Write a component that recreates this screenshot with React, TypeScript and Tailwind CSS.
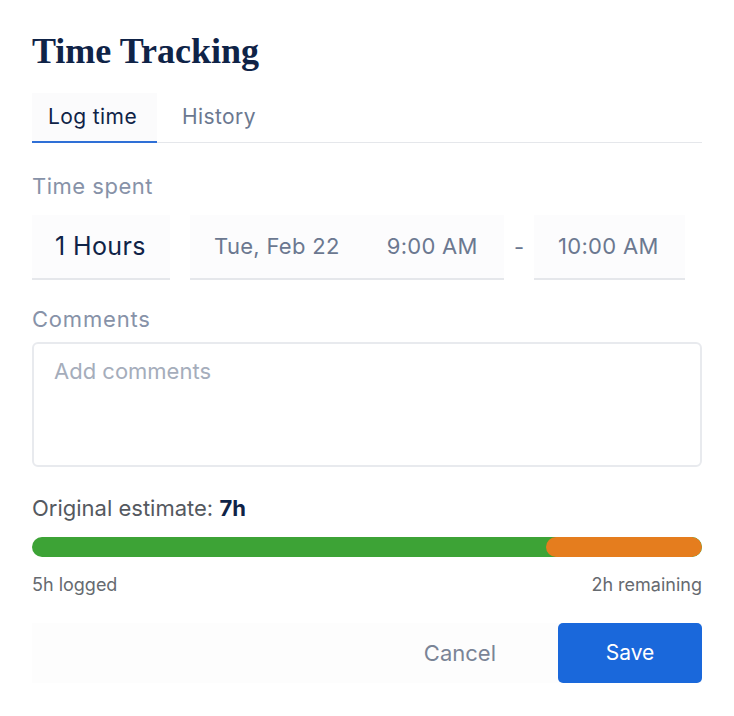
import React, { useState } from "react";

export default function App() {
  const [tab, setTab] = useState("log");
  const [comments, setComments] = useState("");

  const logged = 5;
  const estimate = 7;
  const pct = (logged / estimate) * 100;

  return (
    <div className="w-[734px] h-[716px] bg-white px-8 pt-[30px] font-['Inter',sans-serif]">
      <h1 className="font-['Liberation_Serif',serif] font-bold text-[36px] leading-[42px] text-[#0f2347]">
        Time Tracking
      </h1>

      {/* Tabs */}
      <div className="mt-[21px] flex border-b border-[#e5e7eb] text-[21px] tracking-[0.4px]">
        <button
          onClick={() => setTab("log")}
          className={`h-[50px] pl-[16px] pr-[20px] -mb-px border-b-2 ${
            tab === "log"
              ? "bg-[#fbfbfc] border-[#2f6fd6] text-[#0f2347]"
              : "border-transparent text-[#6b7890]"
          }`}
        >
          Log time
        </button>
        <button
          onClick={() => setTab("history")}
          className={`h-[50px] pl-[25px] pr-6 -mb-px border-b-2 ${
            tab === "history"
              ? "bg-[#fbfbfc] border-[#2f6fd6] text-[#0f2347]"
              : "border-transparent text-[#6b7890]"
          }`}
        >
          History
        </button>
      </div>

      {/* Time spent */}
      <div className="mt-[29px] text-[22px] leading-[28px] tracking-[0.5px] text-[#8792a8]">
        Time spent
      </div>
      <div className="mt-[15px] flex items-center">
        <div className="w-[138px] h-[65px] flex items-center pl-[23px] bg-[#fcfcfd] border-b-2 border-[#e5e7eb] text-[25px] tracking-[0.4px] text-[#0f2347]">
          1 Hours
        </div>
        <div className="ml-5 w-[314px] h-[65px] flex items-center pl-6 bg-[#fcfcfd] border-b-2 border-[#e5e7eb] text-[22px] tracking-[0.3px] text-[#6b7890]">
          <span>Tue, Feb 22</span>
          <span className="ml-[47px]">9:00 AM</span>
        </div>
        <div className="w-[30px] text-center text-[22px] text-[#6b7890]">-</div>
        <div className="w-[151px] h-[65px] flex items-center pl-6 bg-[#fcfcfd] border-b-2 border-[#e5e7eb] text-[22px] tracking-[0.3px] text-[#6b7890]">
          10:00 AM
        </div>
      </div>

      {/* Comments */}
      <div className="mt-[25px] text-[22px] leading-[28px] tracking-[0.8px] text-[#8792a8]">
        Comments
      </div>
      <textarea
        value={comments}
        onChange={(e) => setComments(e.target.value)}
        placeholder="Add comments"
        className="mt-[9px] block w-full h-[125px] resize-none rounded-md border-2 border-[#e8eaee] px-5 py-[13px] text-[22px] leading-[28px] text-[#0f2347] placeholder:text-[#a5adbb] outline-none"
      />

      {/* Estimate */}
      <div className="mt-[27px] text-[22px] leading-[28px] text-[#55595f]">
        Original estimate: <span className="font-bold text-[#0f2347]">7h</span>
      </div>
      <div className="relative mt-[15px] h-5 w-full rounded-full bg-[#3da336] overflow-hidden">
        <div
          className="absolute top-0 right-0 h-5 rounded-full bg-[#e57d1e]"
          style={{ left: `calc(${pct}% + 35px)` }}
        />
      </div>
      <div className="mt-[16px] flex justify-between text-[18px] leading-[24px] text-[#666a70]">
        <span>5h logged</span>
        <span>2h remaining</span>
      </div>

      {/* Actions */}
      <div className="mt-[26px] flex items-center justify-end bg-[#fdfdfd]">
        <button className="h-[60px] px-[62px] text-[22px] text-[#7a8496]">Cancel</button>
        <button className="h-[60px] w-[144px] rounded-[5px] bg-[#1a68db] text-[21px] text-white">
          Save
        </button>
      </div>
    </div>
  );
}
